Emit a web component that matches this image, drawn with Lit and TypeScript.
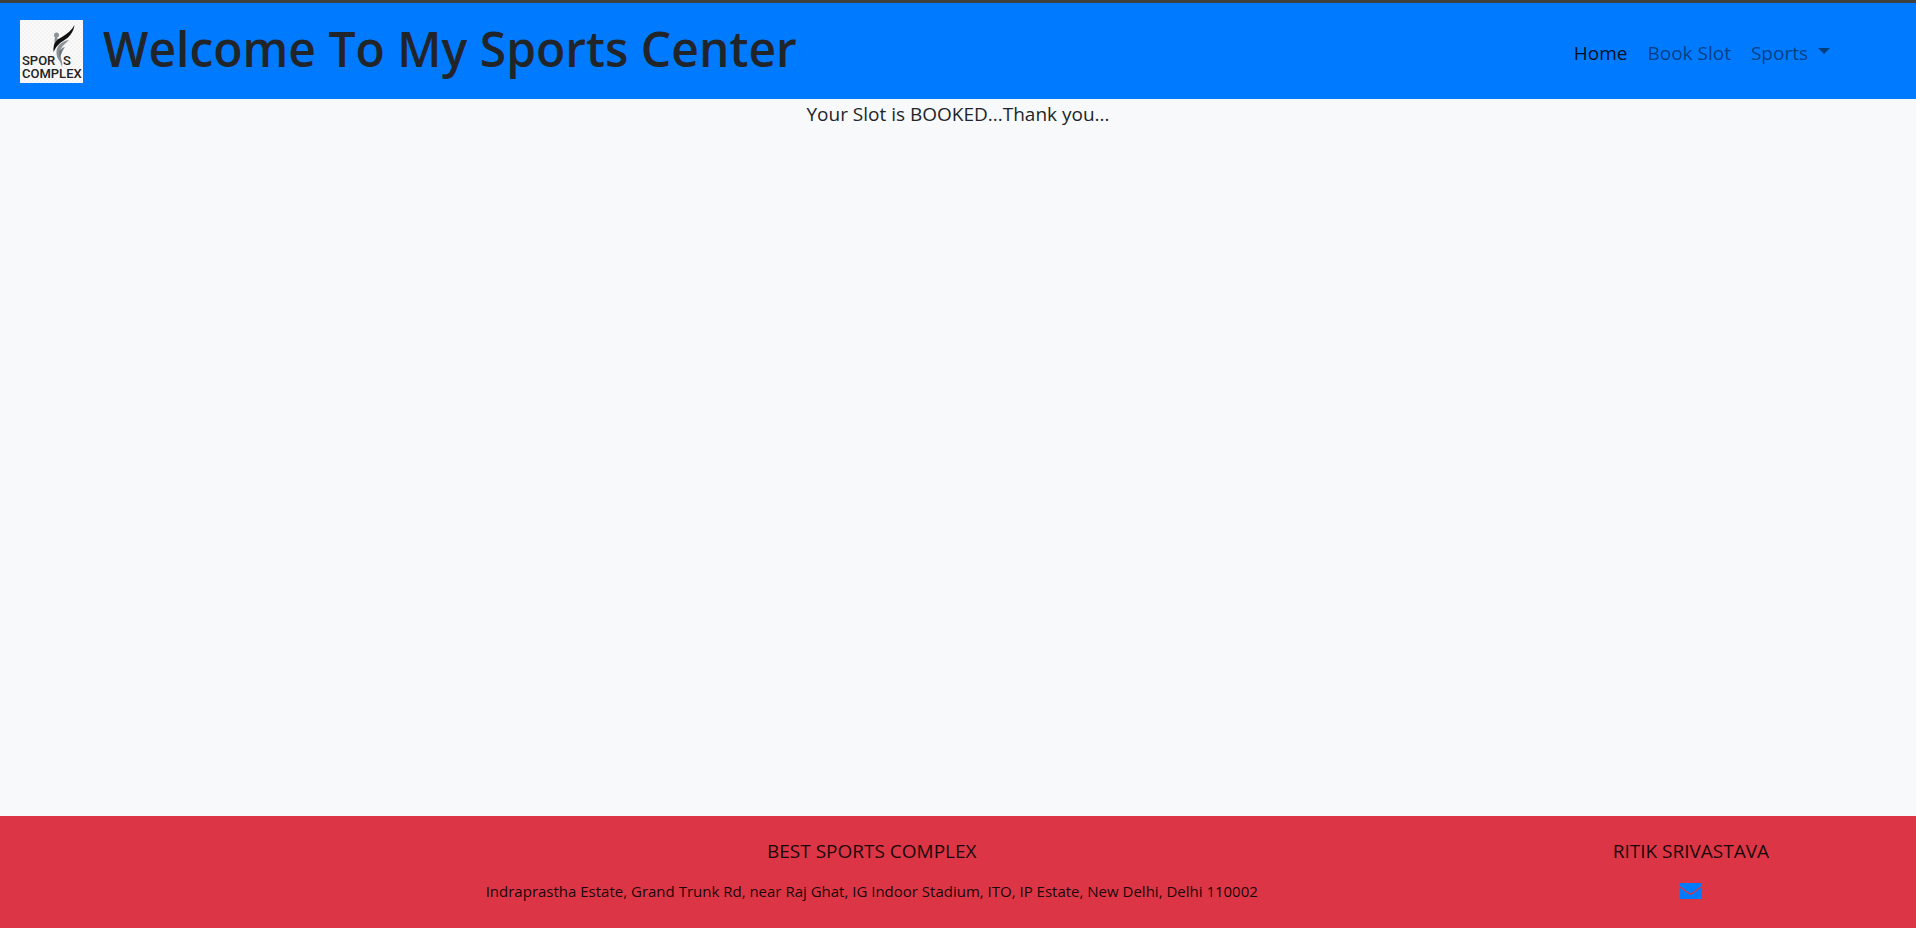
import { LitElement, html, css, svg } from "lit";
import { customElement } from "lit/decorators.js";

const logo = svg`
  <svg class="logo" viewBox="0 0 63 63" role="img" aria-label="Sports Complex">
    <defs>
      <pattern id="weave" width="4" height="4" patternUnits="userSpaceOnUse">
        <rect width="4" height="4" fill="#fafafa" />
        <path d="M0 0h2v2H0zM2 2h2v2H2z" fill="#f3f3f3" />
      </pattern>
    </defs>
    <rect width="63" height="63" fill="url(#weave)" />
    <circle cx="36.500" cy="15" r="2.500" fill="#8a9197" />
    <path d="M35 17c-1 4 0 7-1 12l4-5c0-3 0-5-1-7z" fill="#8a9197" />
    <path d="M54.500 5C52 10 47 14 42 17c-6 3-9 6-8.500 15 3-6 6-9 11-12 5-3 9-8 10-15z" fill="#111" />
    <path d="M49 20c-7 1-13 6-12.500 13 0 6 4 7 5.500 14 1-5-1-8-2-12-1-7 4-10 9-15z" fill="#8a9197" />
    <path d="M45 27c-6 2-7 6-5 12 1-5 2-8 5-12z" fill="#70777d" />
    <text class="logo-text" x="2" y="45">SPOR</text>
    <text class="logo-text" x="43" y="45">S</text>
    <text class="logo-text" x="2" y="58">COMPLEX</text>
  </svg>`;

@customElement("app-root")
export class AppRoot extends LitElement {
  static styles = css`
    :host {
      display: flex;
      flex-direction: column;
      min-height: 100vh;
      box-sizing: border-box;
      border-top: 3px solid #404040;
      background: #f8f9fa;
      color: #212529;
      font: 19px/30px "Open Sans", "Noto Sans", sans-serif;
    }
    .navbar {
      display: flex;
      align-items: center;
      gap: 20px;
      padding: 10px 76px 10px 20px;
      min-height: 76px;
      background: #007bff;
    }
    .brand { display: flex; }
    .logo { width: 63px; height: 63px; display: block; }
    .logo-text { font: 500 13px Roboto, sans-serif; fill: #222; }
    h1 {
      flex: 1;
      margin: 0 0 4px;
      font: 600 48px/60px "Open Sans", sans-serif;
    }
    .links { display: flex; list-style: none; margin: 0; padding: 0; }
    .link {
      display: flex;
      align-items: center;
      gap: 10px;
      padding: 12px 10px 8px;
      border: 0;
      background: none;
      font: inherit;
      color: rgba(0, 0, 0, 0.5);
      text-decoration: none;
      cursor: pointer;
    }
    .active { color: rgba(0, 0, 0, 0.9); }
    .caret {
      border: 6px solid transparent;
      border-top-color: currentColor;
      border-bottom: 0;
      margin-bottom: 4px;
    }
    main { flex: 1; text-align: center; }
    p { margin: 0; }
    footer {
      display: grid;
      grid-template-columns: 14.5fr 62fr 23.5fr;
      padding: 20px 0 22px;
      background: #dc3545;
      color: rgba(0, 0, 0, 0.9);
      text-align: center;
    }
    .col { display: flex; flex-direction: column; align-items: center; gap: 10px; }
    .place { grid-column: 2; }
    .address { font-size: 15px; }
    .mail { display: flex; align-items: center; height: 30px; color: #007bff; }
    .mail svg { width: 21px; height: 16px; }
  `;

  render() {
    return html`
      <nav class="navbar">
        <a class="brand" href="#home">${logo}</a>
        <h1>Welcome To My Sports Center</h1>
        <ul class="links">
          <li><a class="link active" href="#home">Home</a></li>
          <li><a class="link" href="#book">Book Slot</a></li>
          <li>
            <button class="link" type="button" aria-haspopup="true">
              Sports <span class="caret"></span>
            </button>
          </li>
        </ul>
      </nav>
      <main><p>Your Slot is BOOKED...Thank you...</p></main>
      <footer>
        <div class="col place">
          <p>BEST SPORTS COMPLEX</p>
          <p class="address">Indraprastha Estate, Grand Trunk Rd, near Raj Ghat, IG Indoor Stadium, ITO, IP Estate, New Delhi, Delhi 110002</p>
        </div>
        <div class="col">
          <p>RITIK SRIVASTAVA</p>
          <a class="mail" href="#mail" aria-label="Email">
            <svg viewBox="0 0 21 16">
              <path d="M0 0h21v16H0z" fill="#007bff" />
              <path d="M0 4L9 10.500Q10.500 11.500 12 10.500L21 4" fill="none" stroke="#dc3545" stroke-width="1.400" />
            </svg>
          </a>
        </div>
      </footer>
    `;
  }
}
